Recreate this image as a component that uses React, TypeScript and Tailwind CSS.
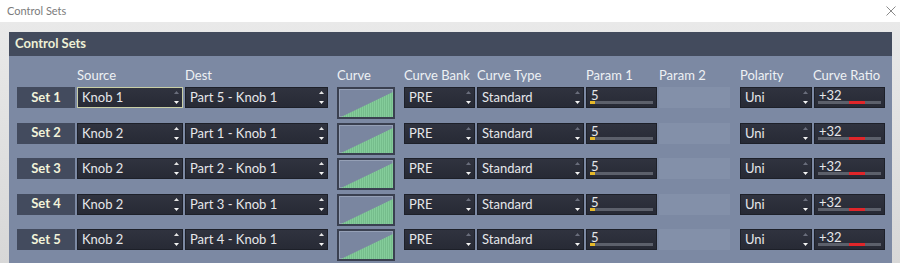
import React from 'react';

type Row = {
  label: string;
  source: string;
  dest: string;
  active?: boolean;
};

const rows: Row[] = [
  { label: 'Set 1', source: 'Knob 1', dest: 'Part 5 - Knob 1', active: true },
  { label: 'Set 2', source: 'Knob 2', dest: 'Part 1 - Knob 1' },
  { label: 'Set 3', source: 'Knob 2', dest: 'Part 2 - Knob 1' },
  { label: 'Set 4', source: 'Knob 2', dest: 'Part 3 - Knob 1' },
  { label: 'Set 5', source: 'Knob 2', dest: 'Part 4 - Knob 1' },
];

const font = { fontFamily: 'Lato, "Noto Sans", Arial, sans-serif' };

const Spinner: React.FC<{ upLit?: boolean }> = ({ upLit = false }) => (
  <div className="absolute right-[3px] top-0 bottom-0 w-[5px] flex flex-col justify-between pt-[3px] pb-[3px]">
    <svg width="5" height="3" viewBox="0 0 5 3" className="block">
      <path d="M0 3 L2.5 0 L5 3 Z" fill={upLit ? '#e4e4e4' : '#6a6e7c'} />
    </svg>
    <svg width="5" height="3" viewBox="0 0 5 3" className="block">
      <path d="M0 0 L5 0 L2.5 3 Z" fill="#f4f4f4" />
    </svg>
  </div>
);

const Field: React.FC<{
  w: string;
  text: string;
  active?: boolean;
  upLit?: boolean;
  spinner?: boolean;
  top?: boolean;
  children?: React.ReactNode;
}> = ({ w, text, active = false, upLit = false, spinner = true, top = false, children }) => (
  <div
    className={`relative h-[21px] ${w} shrink-0 border bg-gradient-to-b from-[#30333f] to-[#272a35] ${
      active ? 'border-[#c9cfa6]' : 'border-[#1d2029]'
    }`}
  >
    <span
      className={`absolute left-[4px] text-[13px] text-[#e6e7ea] ${
        top ? 'top-[-1px] leading-[16px]' : 'top-0 leading-[19px]'
      }`}
    >
      {text}
    </span>
    {children}
    {spinner && <Spinner upLit={upLit} />}
  </div>
);

const Curve: React.FC = () => (
  <div className="h-[32px] w-[58px] shrink-0 border border-[#3a4050] bg-[#3a4050] p-[1px]">
    <div className="h-full w-full border border-[#95a0b6] bg-[#7a86a0]">
      <svg width="54" height="28" viewBox="0 0 54 28" className="block">
        <defs>
          <pattern id="stripes" width="2" height="28" patternUnits="userSpaceOnUse">
            <rect width="1" height="28" fill="#84cc9a" />
            <rect x="1" width="1" height="28" fill="#76bd8c" />
          </pattern>
        </defs>
        <path d="M1 27 L53 2 L53 27 Z" fill="url(#stripes)" />
      </svg>
    </div>
  </div>
);

const Slider: React.FC<{ color: string; from: number; width: number }> = ({ color, from, width }) => (
  <div className="absolute left-[3px] right-[3px] bottom-[3px] h-[3px] bg-[#5c606b]">
    <div className="absolute top-0 h-[3px]" style={{ left: from, width, background: color }} />
  </div>
);

export default function App() {
  return (
    <div className="w-[900px] h-[263px] overflow-hidden bg-[#dcdcdc] flex flex-col" style={font}>
      <div className="h-[22px] shrink-0 bg-white flex items-center justify-between pl-[7px] pr-[4px]">
        <span className="text-[11px] text-[#7b7b7b]">Control Sets</span>
        <svg width="10" height="10" viewBox="0 0 10 10">
          <path d="M0.5 0.5 L9.5 9.5 M9.5 0.5 L0.5 9.5" stroke="#8a8a8a" strokeWidth="1" />
        </svg>
      </div>
      <div className="flex-1 flex bg-gradient-to-b from-[#e9e9e9] to-[#d7d7d7] pt-[10px] pl-[9px] pr-[8px]">
        <div className="flex-1 flex flex-col bg-[#7c89a3]">
          <div className="h-[24px] shrink-0 bg-[#434b5d] flex items-center pl-[6px]">
            <span className="text-[13px] font-bold text-[#eef0d6]">Control Sets</span>
          </div>
          <div className="flex flex-col pl-[8px] pt-[8px]">
            <div className="flex h-[23px] text-[13px] text-[#eef1f4] leading-[22px]">
              <div className="w-[60px]" />
              <div className="w-[108px]">Source</div>
              <div className="w-[152px]">Dest</div>
              <div className="w-[67px]">Curve</div>
              <div className="w-[73px]">Curve Bank</div>
              <div className="w-[109px]">Curve Type</div>
              <div className="w-[73px]">Param 1</div>
              <div className="w-[81px]">Param 2</div>
              <div className="w-[73px]">Polarity</div>
              <div>Curve Ratio</div>
            </div>
            {rows.map((r) => (
              <div key={r.label} className="flex items-start h-[35.5px]">
                <div className="h-[21px] w-[58px] shrink-0 bg-[#434b5e] flex items-center justify-center">
                  <span className="text-[13px] font-bold text-[#f2f3da]">{r.label}</span>
                </div>
                <div className="w-[2px]" />
                <Field w="w-[106px]" text={r.source} active={r.active} upLit={!r.active} />
                <div className="w-[2px]" />
                <Field w="w-[143px]" text={r.dest} upLit />
                <div className="w-[9px]" />
                <Curve />
                <div className="w-[9px]" />
                <Field w="w-[71px]" text="PRE" />
                <div className="w-[2px]" />
                <Field w="w-[107px]" text="Standard" />
                <div className="w-[2px]" />
                <Field w="w-[71px]" text="5" spinner={false} top>
                  <Slider color="#e5b82a" from={0} width={5} />
                </Field>
                <div className="w-[2px]" />
                <div className="h-[21px] w-[71px] shrink-0 bg-[#8390a9]" />
                <div className="w-[10px]" />
                <Field w="w-[72px]" text="Uni" />
                <div className="w-[2px]" />
                <Field w="w-[71px]" text="+32" spinner={false} top>
                  <Slider color="#e0262a" from={31} width={16} />
                </Field>
              </div>
            ))}
          </div>
        </div>
      </div>
    </div>
  );
}
